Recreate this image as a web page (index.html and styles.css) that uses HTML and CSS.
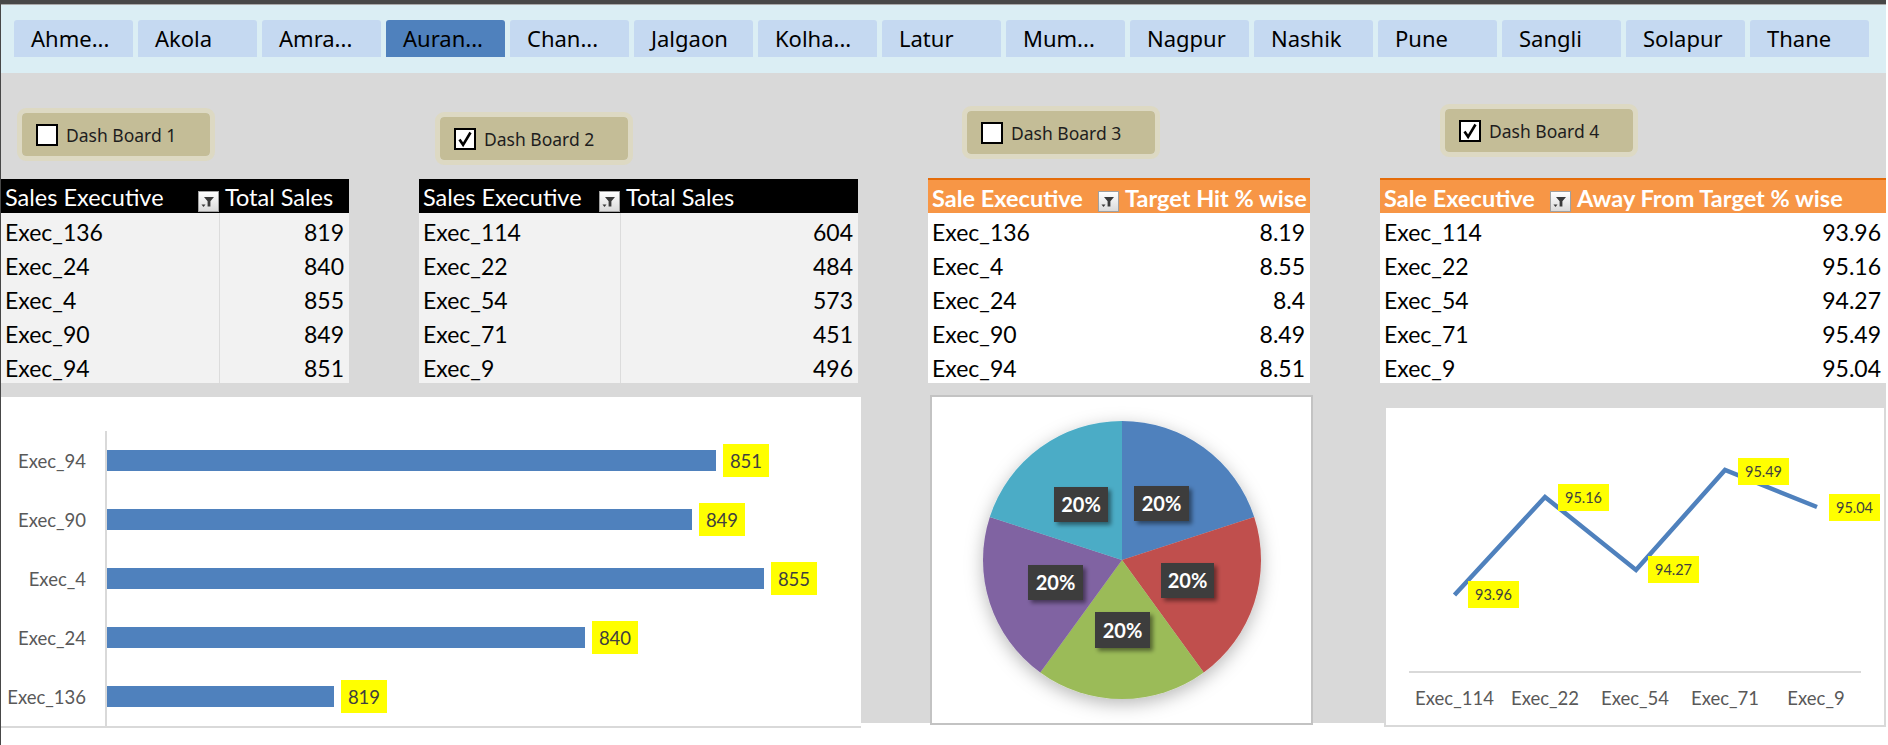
FILE: index.html
```html
<!DOCTYPE html>
<html lang="en">
<head>
<meta charset="utf-8">
<title>Sales Dashboard</title>
<link rel="stylesheet" href="styles.css">
</head>
<body>
<div class="frame">
  <div class="tabbar">
    <div class="tab">Ahme...</div>
    <div class="tab">Akola</div>
    <div class="tab">Amra...</div>
    <div class="tab active">Auran...</div>
    <div class="tab">Chan...</div>
    <div class="tab">Jalgaon</div>
    <div class="tab">Kolha...</div>
    <div class="tab">Latur</div>
    <div class="tab">Mum...</div>
    <div class="tab">Nagpur</div>
    <div class="tab">Nashik</div>
    <div class="tab">Pune</div>
    <div class="tab">Sangli</div>
    <div class="tab">Solapur</div>
    <div class="tab">Thane</div>
  </div>

  <div class="sheet">
    <!-- Panel 1 -->
    <section class="panel p1">
      <div class="btn-zone">
        <div class="dbtn"><span class="cb"></span><span class="dlabel">Dash Board 1</span></div>
      </div>
      <div class="pt dark t1">
        <div class="pt-head">
          <div class="c1"><span>Sales Executive</span><span class="filt"><svg viewBox="0 0 19 19" width="19" height="19"><path d="M5 5h10l-3.6 4.2v5.3h-2.8v-5.3z" fill="#3a3a3a"/><path d="M2.5 12.5h4l-2 2.4z" fill="#3a3a3a"/></svg></span></div>
          <div class="c2">Total Sales</div>
        </div>
        <div class="pt-row"><div class="c1">Exec_136</div><div class="c2">819</div></div>
        <div class="pt-row"><div class="c1">Exec_24</div><div class="c2">840</div></div>
        <div class="pt-row"><div class="c1">Exec_4</div><div class="c2">855</div></div>
        <div class="pt-row"><div class="c1">Exec_90</div><div class="c2">849</div></div>
        <div class="pt-row"><div class="c1">Exec_94</div><div class="c2">851</div></div>
      </div>
    </section>

    <!-- Panel 2 -->
    <section class="panel p2">
      <div class="btn-zone">
        <div class="dbtn"><span class="cb"><svg viewBox="0 0 18 18" width="18" height="18"><path d="M3.5 9.5l3.6 5.3L14.5 2.5" fill="none" stroke="#000" stroke-width="2.6"/></svg></span><span class="dlabel">Dash Board 2</span></div>
      </div>
      <div class="pt dark t2">
        <div class="pt-head">
          <div class="c1"><span>Sales Executive</span><span class="filt"><svg viewBox="0 0 19 19" width="19" height="19"><path d="M5 5h10l-3.6 4.2v5.3h-2.8v-5.3z" fill="#3a3a3a"/><path d="M2.5 12.5h4l-2 2.4z" fill="#3a3a3a"/></svg></span></div>
          <div class="c2">Total Sales</div>
        </div>
        <div class="pt-row"><div class="c1">Exec_114</div><div class="c2">604</div></div>
        <div class="pt-row"><div class="c1">Exec_22</div><div class="c2">484</div></div>
        <div class="pt-row"><div class="c1">Exec_54</div><div class="c2">573</div></div>
        <div class="pt-row"><div class="c1">Exec_71</div><div class="c2">451</div></div>
        <div class="pt-row"><div class="c1">Exec_9</div><div class="c2">496</div></div>
      </div>
    </section>

    <!-- Panel 3 -->
    <section class="panel p3">
      <div class="btn-zone">
        <div class="dbtn"><span class="cb"></span><span class="dlabel">Dash Board 3</span></div>
      </div>
      <div class="pt orange t3">
        <div class="pt-head">
          <div class="c1"><span>Sale Executive</span><span class="filt"><svg viewBox="0 0 19 19" width="19" height="19"><path d="M5 5h10l-3.6 4.2v5.3h-2.8v-5.3z" fill="#3a3a3a"/><path d="M2.5 12.5h4l-2 2.4z" fill="#3a3a3a"/></svg></span></div>
          <div class="c2">Target Hit % wise</div>
        </div>
        <div class="pt-row"><div class="c1">Exec_136</div><div class="c2">8.19</div></div>
        <div class="pt-row"><div class="c1">Exec_4</div><div class="c2">8.55</div></div>
        <div class="pt-row"><div class="c1">Exec_24</div><div class="c2">8.4</div></div>
        <div class="pt-row"><div class="c1">Exec_90</div><div class="c2">8.49</div></div>
        <div class="pt-row"><div class="c1">Exec_94</div><div class="c2">8.51</div></div>
      </div>
    </section>

    <!-- Panel 4 -->
    <section class="panel p4">
      <div class="btn-zone">
        <div class="dbtn"><span class="cb"><svg viewBox="0 0 18 18" width="18" height="18"><path d="M3.5 9.5l3.6 5.3L14.5 2.5" fill="none" stroke="#000" stroke-width="2.6"/></svg></span><span class="dlabel">Dash Board 4</span></div>
      </div>
      <div class="pt orange t4">
        <div class="pt-head">
          <div class="c1"><span>Sale Executive</span><span class="filt"><svg viewBox="0 0 19 19" width="19" height="19"><path d="M5 5h10l-3.6 4.2v5.3h-2.8v-5.3z" fill="#3a3a3a"/><path d="M2.5 12.5h4l-2 2.4z" fill="#3a3a3a"/></svg></span></div>
          <div class="c2">Away From Target % wise</div>
        </div>
        <div class="pt-row"><div class="c1">Exec_114</div><div class="c2">93.96</div></div>
        <div class="pt-row"><div class="c1">Exec_22</div><div class="c2">95.16</div></div>
        <div class="pt-row"><div class="c1">Exec_54</div><div class="c2">94.27</div></div>
        <div class="pt-row"><div class="c1">Exec_71</div><div class="c2">95.49</div></div>
        <div class="pt-row"><div class="c1">Exec_9</div><div class="c2">95.04</div></div>
      </div>
    </section>

    <!-- Bar chart -->
    <div class="chart bar-chart">
      <div class="bar-labels">
        <div class="blabel">Exec_94</div>
        <div class="blabel">Exec_90</div>
        <div class="blabel">Exec_4</div>
        <div class="blabel">Exec_24</div>
        <div class="blabel">Exec_136</div>
      </div>
      <div class="bar-plot">
        <div class="brow"><div class="bar" style="width:609px"></div><div class="dlbl">851</div></div>
        <div class="brow"><div class="bar" style="width:585px"></div><div class="dlbl">849</div></div>
        <div class="brow"><div class="bar" style="width:657px"></div><div class="dlbl">855</div></div>
        <div class="brow"><div class="bar" style="width:478px"></div><div class="dlbl">840</div></div>
        <div class="brow"><div class="bar" style="width:227px"></div><div class="dlbl">819</div></div>
      </div>
    </div>

    <!-- Pie chart -->
    <div class="chart pie-chart">
      <svg class="pie-svg" viewBox="2 2 379 326" width="379" height="326">
        <defs>
          <filter id="pieShadow" x="-25%" y="-25%" width="150%" height="155%">
            <feDropShadow dx="0" dy="5" stdDeviation="9" flood-color="#000" flood-opacity="0.28"/>
          </filter>
          <filter id="lblShadow" x="-20%" y="-20%" width="150%" height="160%">
            <feDropShadow dx="3" dy="3" stdDeviation="2" flood-color="#000" flood-opacity="0.45"/>
          </filter>
        </defs>
        <g filter="url(#pieShadow)">
          <path d="M192 165 L192 26 A139 139 0 0 1 324.2 122.05 Z" fill="#4f81bd"/>
          <path d="M192 165 L324.2 122.05 A139 139 0 0 1 273.7 277.5 Z" fill="#c0504d"/>
          <path d="M192 165 L273.7 277.5 A139 139 0 0 1 110.3 277.5 Z" fill="#9bbb59"/>
          <path d="M192 165 L110.3 277.5 A139 139 0 0 1 59.8 122.05 Z" fill="#8064a2"/>
          <path d="M192 165 L59.8 122.05 A139 139 0 0 1 192 26 Z" fill="#4bacc6"/>
        </g>
        <g class="pie-lbl">
          <rect x="204" y="91" width="55" height="35" filter="url(#lblShadow)"/>
          <text x="231.5" y="116">20%</text>
          <rect x="124" y="92" width="54" height="35" filter="url(#lblShadow)"/>
          <text x="151" y="117">20%</text>
          <rect x="231" y="168" width="53" height="35" filter="url(#lblShadow)"/>
          <text x="257.5" y="193">20%</text>
          <rect x="98" y="170" width="55" height="35" filter="url(#lblShadow)"/>
          <text x="125.5" y="195">20%</text>
          <rect x="165" y="217" width="55" height="36" filter="url(#lblShadow)"/>
          <text x="192.5" y="242.5">20%</text>
        </g>
      </svg>
    </div>

    <!-- Line chart -->
    <div class="chart line-chart">
      <svg class="line-svg" viewBox="2 2 498 317" width="498" height="317">
        <line x1="25" y1="266" x2="477" y2="266" stroke="#d9d9d9" stroke-width="2"/>
        <polyline points="70.5,189 161,91 252,164 341,64 433,101" fill="none" stroke="#4f81bd" stroke-width="4.5" stroke-linejoin="miter"/>
        <g class="line-lbl">
          <rect x="84" y="175" width="51" height="27"/><text x="109.5" y="194">93.96</text>
          <rect x="174" y="78" width="51" height="27"/><text x="199.5" y="97">95.16</text>
          <rect x="264" y="150" width="51" height="27"/><text x="289.5" y="169">94.27</text>
          <rect x="354" y="52" width="51" height="27"/><text x="379.5" y="71">95.49</text>
          <rect x="445" y="88" width="51" height="27"/><text x="470.5" y="107">95.04</text>
        </g>
        <g class="line-axis">
          <text x="70.5" y="299">Exec_114</text>
          <text x="161" y="299">Exec_22</text>
          <text x="251" y="299">Exec_54</text>
          <text x="341" y="299">Exec_71</text>
          <text x="432" y="299">Exec_9</text>
        </g>
      </svg>
    </div>
  </div>
</div>
</body>
</html>
```

FILE: styles.css
```css
* { box-sizing: border-box; }

html, body {
  margin: 0;
  padding: 0;
  background: #ffffff;
}

body {
  font-family: "Lato", "Noto Sans", sans-serif;
  color: #000;
}

.frame {
  width: 1886px;
  border-top: 4px solid #474747;
  border-left: 1px solid #474747;
}

/* ---------- Slicer tab bar ---------- */
.tabbar {
  height: 69px;
  border-top: 1px solid #a8a8a8;
  background: #dbeef4;
  padding: 15px 0 0 13px;
  display: flex;
  gap: 5px;
}

.tab {
  width: 119px;
  height: 37px;
  background: #c5d9f1;
  border-radius: 3px 3px 0 0;
  font-family: "Noto Sans", "Open Sans", sans-serif;
  font-size: 22px;
  line-height: 37px;
  padding-left: 17px;
  color: #000;
  white-space: nowrap;
  overflow: hidden;
}

.tab.active {
  background: #4f81bd;
}

/* ---------- Sheet area ---------- */
.sheet {
  height: 672px;
  background: linear-gradient(to bottom, #d9d9d9 0, #d9d9d9 650px, #ffffff 650px);
  display: grid;
  grid-template-columns: 348px 439px 382px 506px;
  grid-template-rows: auto auto;
  column-gap: 70px;
  align-items: start;
  align-content: start;
}

.panel {
  display: flex;
  flex-direction: column;
}

.btn-zone {
  height: 105px;
}

.p1 .dbtn { margin: 35px 0 0 16px; }
.p2 .dbtn { margin: 39px 0 0 16px; }
.p3 .dbtn { margin: 33px 0 0 34px; }
.p4 .dbtn { margin: 31px 0 0 60px; }

.dbtn {
  width: 198px;
  height: 53px;
  border: 5px solid #ddd9c3;
  border-radius: 9px;
  background: #c4bd97;
  background-clip: padding-box;
  display: flex;
  align-items: center;
  padding-left: 14px;
  gap: 8px;
}

.cb {
  width: 22px;
  height: 22px;
  border: 2px solid #000;
  background: #fff;
  display: flex;
  align-items: center;
  justify-content: center;
}

.cb svg { display: block; }

.dlabel {
  font-family: "Noto Sans", "Open Sans", sans-serif;
  font-size: 17.5px;
  color: #1e1e1e;
  white-space: nowrap;
}

/* ---------- Pivot tables ---------- */
.pt {
  font-family: "Lato", sans-serif;
  font-size: 23px;
}

.t1 { --c1: 219px; }
.t2 { --c1: 202px; }
.t3 { --c1: 192px; }
.t4 { --c1: 192px; }

.pt-head,
.pt-row {
  display: grid;
  grid-template-columns: var(--c1) 1fr;
}

.pt-head {
  white-space: nowrap;
  font-size: 23.5px;
}

.pt-head .c1 {
  display: flex;
  justify-content: space-between;
  align-items: center;
  padding-left: 4px;
  padding-right: 1px;
}

.pt-head .c1 > span:first-child,
.pt-head .c2 {
  padding-top: 2px;
}

.pt-head .c2 {
  padding-left: 5px;
  display: flex;
  align-items: center;
}

.dark { margin-top: 1px; }

.dark .pt-head {
  height: 34px;
  background: #000;
  color: #fff;
}

.orange .pt-head {
  height: 35px;
  border-top: 2px solid #e46c0a;
  background: #f79646;
  color: #fff;
  font-weight: 700;
}

.pt-head .filt {
  align-self: flex-end;
  margin-bottom: 1px;
  width: 21px;
  height: 21px;
  border: 1px solid #a0a0a0;
  background: linear-gradient(#ffffff, #dadada);
  display: flex;
  align-items: center;
  justify-content: center;
  font-weight: 400;
}

.filt svg { display: block; }

.pt-row {
  height: 34px;
}

.pt-row .c1,
.pt-row .c2 {
  padding-top: 5px;
  line-height: 29px;
}

.dark .pt-row { background: #f2f2f2; }
.orange .pt-row { background: #ffffff; }

.pt-row .c1 {
  padding-left: 4px;
}

.dark .pt-row .c1 {
  border-right: 1px solid #dcdcdc;
}

.pt-row .c2 {
  text-align: right;
  padding-right: 5px;
}

/* ---------- Charts ---------- */
.chart {
  background: #fff;
}

.bar-chart {
  grid-column: 1 / 3;
  width: 860px;
  margin-top: 14px;
  padding-top: 34px;
  border-bottom: 2px solid #d9d9d9;
  display: grid;
  grid-template-columns: 104px 1fr;
}

.bar-labels {
  padding-right: 19px;
}

.blabel {
  height: 59px;
  display: flex;
  align-items: center;
  justify-content: flex-end;
  font-size: 18.5px;
  color: #595959;
}

.bar-plot {
  border-left: 2px solid #d9d9d9;
}

.brow {
  height: 59px;
  display: flex;
  align-items: center;
}

.bar {
  height: 21px;
  background: #4f81bd;
}

.dlbl {
  margin-left: 7px;
  width: 46px;
  height: 33px;
  background: #ffff00;
  color: #404040;
  font-size: 18.5px;
  display: flex;
  align-items: center;
  justify-content: center;
}

.pie-chart {
  grid-column: 3;
  margin-top: 12px;
  margin-left: 2px;
  width: 383px;
  height: 330px;
  border: 2px solid #c3c3c3;
}

.pie-svg,
.line-svg {
  display: block;
}

.pie-lbl rect { fill: #3d3d3d; }

.pie-lbl text {
  fill: #ffffff;
  font-family: "Lato", sans-serif;
  font-weight: 700;
  font-size: 20px;
  text-anchor: middle;
}

.line-chart {
  grid-column: 4;
  margin-top: 23px;
  margin-left: 4px;
  width: 502px;
  height: 321px;
  border: 2px solid #d9d9d9;
}

.line-lbl rect { fill: #ffff00; }

.line-lbl text {
  fill: #404040;
  font-family: "Lato", sans-serif;
  font-size: 14.5px;
  text-anchor: middle;
}

.line-axis text {
  fill: #595959;
  font-family: "Lato", sans-serif;
  font-size: 18.5px;
  text-anchor: middle;
}
```
